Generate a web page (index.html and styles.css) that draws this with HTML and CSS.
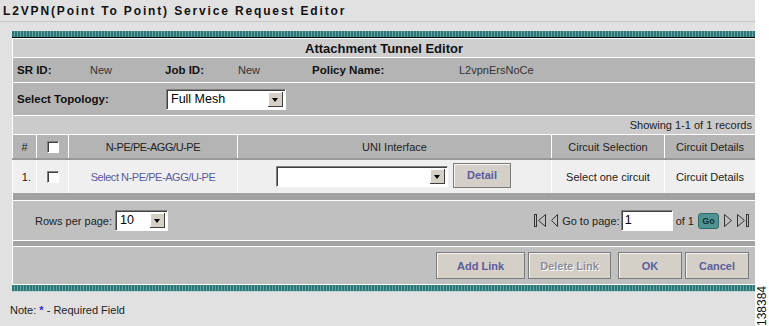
FILE: index.html
```html
<!DOCTYPE html>
<html lang="en">
<head>
  <meta charset="UTF-8">
  <title>L2VPN Service Request Editor</title>
  <link rel="stylesheet" href="styles.css">
</head>
<body>
<div class="page">
  <h1 class="title">L2VPN(Point To Point) Service Request Editor</h1>

  <div class="panel">
    <div class="teal top"></div>
    <div class="panel-title">Attachment Tunnel Editor</div>

    <div class="info-row">
      <b>SR ID:</b><span>New</span>
      <b>Job ID:</b><span>New</span>
      <b>Policy Name:</b><span>L2vpnErsNoCe</span>
    </div>

    <div class="topo-row">
      <b>Select Topology:</b>
      <div class="combo topo"><span class="combo-text">Full Mesh</span><span class="combo-btn"></span></div>
    </div>

    <div class="records">Showing 1-1 of 1 records</div>

    <table class="grid">
      <tr class="head">
        <td class="c-num">#</td>
        <td class="c-cb"><span class="check"></span></td>
        <td class="c-pe">N-PE/PE-AGG/U-PE</td>
        <td class="c-uni">UNI Interface</td>
        <td class="c-sel">Circuit Selection</td>
        <td class="c-det">Circuit Details</td>
      </tr>
      <tr class="row">
        <td class="c-num">1.</td>
        <td class="c-cb"><span class="check"></span></td>
        <td class="c-pe"><a href="#">Select N-PE/PE-AGG/U-PE</a></td>
        <td class="c-uni">
          <div class="uni-cell">
            <div class="combo uni"><span class="combo-text"></span><span class="combo-btn"></span></div>
            <button class="btn detail">Detail</button>
          </div>
        </td>
        <td class="c-sel">Select one circuit</td>
        <td class="c-det">Circuit Details</td>
      </tr>
    </table>

    <div class="band"></div>

    <div class="pager">
      <div class="rows">
        Rows per page:
        <div class="combo small"><span class="combo-text">10</span><span class="combo-btn"></span></div>
      </div>
      <div class="nav">
        <svg class="ico" width="14" height="15" viewBox="0 0 14 15"><rect x="1.5" y="1.5" width="2" height="12" fill="none" stroke="#333"/><path d="M12.5 1.5 L5.5 7.5 L12.5 13.5 Z" fill="none" stroke="#333"/></svg>
        <svg class="ico" width="9" height="15" viewBox="0 0 9 15"><path d="M7.5 1.5 L1.5 7.5 L7.5 13.5 Z" fill="none" stroke="#333"/></svg>
        <span>Go to page:</span>
        <span class="field">1</span>
        <span>of 1</span>
        <span class="go">Go</span>
        <svg class="ico" width="10" height="15" viewBox="0 0 10 15"><path d="M1.5 1.5 L8.5 7.5 L1.5 13.5 Z" fill="none" stroke="#333"/></svg>
        <svg class="ico" width="15" height="15" viewBox="0 0 15 15"><path d="M1.5 1.5 L8.5 7.5 L1.5 13.5 Z" fill="none" stroke="#333"/><rect x="10.5" y="1.5" width="2" height="12" fill="none" stroke="#333"/></svg>
      </div>
    </div>

    <div class="band thin"></div>

    <div class="actions">
      <button class="btn add">Add Link</button>
      <button class="btn del" disabled>Delete Link</button>
      <button class="btn ok">OK</button>
      <button class="btn cancel">Cancel</button>
    </div>

    <div class="teal bottom"></div>
  </div>

  <p class="note">Note: <span class="req">*</span> - Required Field</p>
</div>
<div class="side"><span class="fig">138384</span></div>
</body>
</html>
```

FILE: styles.css
```css
body {
  margin: 0;
  background: #ffffff;
  font-family: "Liberation Sans", Arial, sans-serif;
  font-size: 11px;
  color: #111;
  display: flex;
  height: 326px;
  overflow: hidden;
}

.page {
  width: 755px;
  height: 326px;
  background: #e1e1e1;
}

.title {
  margin: 0;
  height: 21px;
  line-height: 22px;
  padding-left: 3px;
  font-size: 12px;
  font-weight: bold;
  letter-spacing: 1.85px;
  color: #111;
  border-bottom: 1px solid #c6c6c6;
}

.panel {
  margin: 9px 0 0 12px;
  width: 743px;
}

/* striped teal rule */
.teal {
  height: 6px;
  background: repeating-linear-gradient(90deg, #2b7777 0 2px, #67a3a3 2px 3px);
}

.teal.top {
  border-bottom: 1px solid #000;
}

.teal.bottom {
  border-bottom: 1px solid #b8d8d8;
}

.panel-title,
.info-row,
.topo-row,
.records,
.grid,
.band,
.pager,
.actions {
  border-left: 1px solid #fff;
}

.panel-title {
  height: 18px;
  line-height: 19px;
  border-top: 1px solid #fff;
  border-bottom: 1px solid #fff;
  background: #cfcfcf;
  text-align: center;
  font-size: 13px;
  font-weight: bold;
}

.info-row {
  height: 24px;
  background: #b4b4b4;
  border-bottom: 1px solid #fff;
  display: grid;
  grid-template-columns: 73px 75px 73px 74px 147px auto;
  align-items: center;
  padding-left: 4px;
}

.info-row b,
.topo-row b {
  font-size: 11.5px;
}

.info-row span {
  color: #333;
}

.topo-row {
  height: 32px;
  background: #b4b4b4;
  border-bottom: 1px solid #fff;
  display: flex;
  align-items: center;
  padding-left: 4px;
}

.topo-row b {
  width: 149px;
}

/* classic windows combo box */
.combo {
  display: flex;
  height: 21px;
  box-sizing: border-box;
  background: #fff;
  border-top: 1px solid #808080;
  border-left: 1px solid #808080;
  border-right: 1px solid #fff;
  border-bottom: 1px solid #fff;
  box-shadow: inset 1px 1px 0 #404040;
}

.combo-text {
  flex: 1;
  padding: 2px 0 0 4px;
  font-size: 12.5px;
  color: #000;
}

.combo-btn {
  width: 15px;
  margin: 2px 2px 2px 0;
  background: #d4d0c8;
  box-shadow: inset -1px -1px 0 #404040, inset 1px 1px 0 #fff;
  position: relative;
}

.combo-btn::after {
  content: "";
  position: absolute;
  left: 4px;
  top: 6px;
  border-left: 3px solid transparent;
  border-right: 3px solid transparent;
  border-top: 4px solid #000;
}

.combo.topo {
  width: 120px;
}

.combo.uni {
  width: 172px;
}

.combo.small {
  width: 53px;
}

.records {
  height: 18px;
  line-height: 19px;
  background: #cbcbcb;
  border-bottom: 1px solid #fff;
  text-align: right;
  padding-right: 3px;
  color: #222;
}

.grid {
  width: 743px;
  border-collapse: collapse;
  table-layout: fixed;
}

.grid td {
  padding: 0;
  text-align: center;
  border-right: 1px solid #fff;
  color: #222;
}

.grid td:last-child {
  border-right: none;
}

.grid .head td {
  height: 23px;
  background: #b4b4b4;
  border-bottom: 2px solid #999;
}

.grid .row td {
  height: 33px;
  background: #efefef;
}

.c-num { width: 23px; }
.c-cb { width: 31px; }
.c-pe { width: 168px; letter-spacing: -0.45px; }
.c-uni { width: 313px; }
.c-sel { width: 112px; }

.grid .row .c-num {
  text-align: right;
  padding-right: 5px;
  box-sizing: border-box;
}

.check {
  display: inline-block;
  width: 12px;
  height: 12px;
  box-sizing: border-box;
  background: #fff;
  border-top: 1px solid #808080;
  border-left: 1px solid #808080;
  border-right: 1px solid #fff;
  border-bottom: 1px solid #fff;
  box-shadow: inset 1px 1px 0 #404040;
  vertical-align: middle;
}

.grid a {
  color: #5a5aa0;
  text-decoration: none;
}

.uni-cell {
  display: flex;
  align-items: center;
  gap: 5px;
  padding-left: 38px;
  letter-spacing: 0;
}

.btn {
  font-family: "Liberation Sans", Arial, sans-serif;
  font-size: 11px;
  font-weight: bold;
  color: #5c5c9c;
  background: #d4d0c8;
  border: 1px solid #7a7a7a;
  box-shadow: inset 1px 1px 0 #f4f4f4;
  padding: 0;
  height: 25px;
}

.btn.detail {
  width: 58px;
  margin-top: -3px;
}

.btn.del {
  color: #8c8c98;
  text-shadow: 1px 1px 0 #fff;
}

.band {
  height: 7px;
  background: #a2a2a2;
  border-bottom: 1px solid #fff;
}

.band.thin {
  height: 5px;
}

.pager {
  height: 39px;
  background: #c0c0c0;
  border-bottom: 1px solid #fff;
  display: flex;
  align-items: center;
  justify-content: space-between;
  padding: 0 4px 0 22px;
}

.rows {
  display: flex;
  align-items: center;
  gap: 3px;
  color: #222;
}

.nav {
  display: flex;
  align-items: center;
  gap: 3px;
  color: #222;
}

.nav .ico {
  display: block;
}

.field {
  width: 52px;
  height: 21px;
  box-sizing: border-box;
  background: #fff;
  border-top: 1px solid #808080;
  border-left: 1px solid #808080;
  border-right: 1px solid #fff;
  border-bottom: 1px solid #fff;
  box-shadow: inset 1px 1px 0 #404040;
  font-size: 12.5px;
  padding: 2px 0 0 3px;
  color: #000;
  margin-left: -2px;
}

.go {
  width: 19px;
  height: 14px;
  line-height: 14px;
  border-radius: 3px;
  background: #4f9393;
  border: 1px solid #2e6a6a;
  text-align: center;
  font-size: 9px;
  font-weight: bold;
  color: #0f2f2f;
  margin: 0 1px;
}

.actions {
  height: 37px;
  background: #c0c0c0;
  border-bottom: 1px solid #fff;
  display: flex;
  align-items: center;
  justify-content: flex-end;
  gap: 3px;
  padding-right: 6px;
}

.actions .btn {
  height: 27px;
}

.btn.add { width: 89px; }
.btn.del { width: 83px; margin-right: 4px; }
.btn.ok { width: 64px; }
.btn.cancel { width: 64px; }

.note {
  margin: 12px 0 0 10px;
  color: #222;
}

.req {
  color: #2a2ad0;
  font-weight: bold;
}

.side {
  width: 14px;
  display: flex;
  align-items: flex-end;
  justify-content: center;
}

.fig {
  writing-mode: vertical-rl;
  transform: rotate(180deg);
  font-size: 12px;
  color: #111;
}
```
